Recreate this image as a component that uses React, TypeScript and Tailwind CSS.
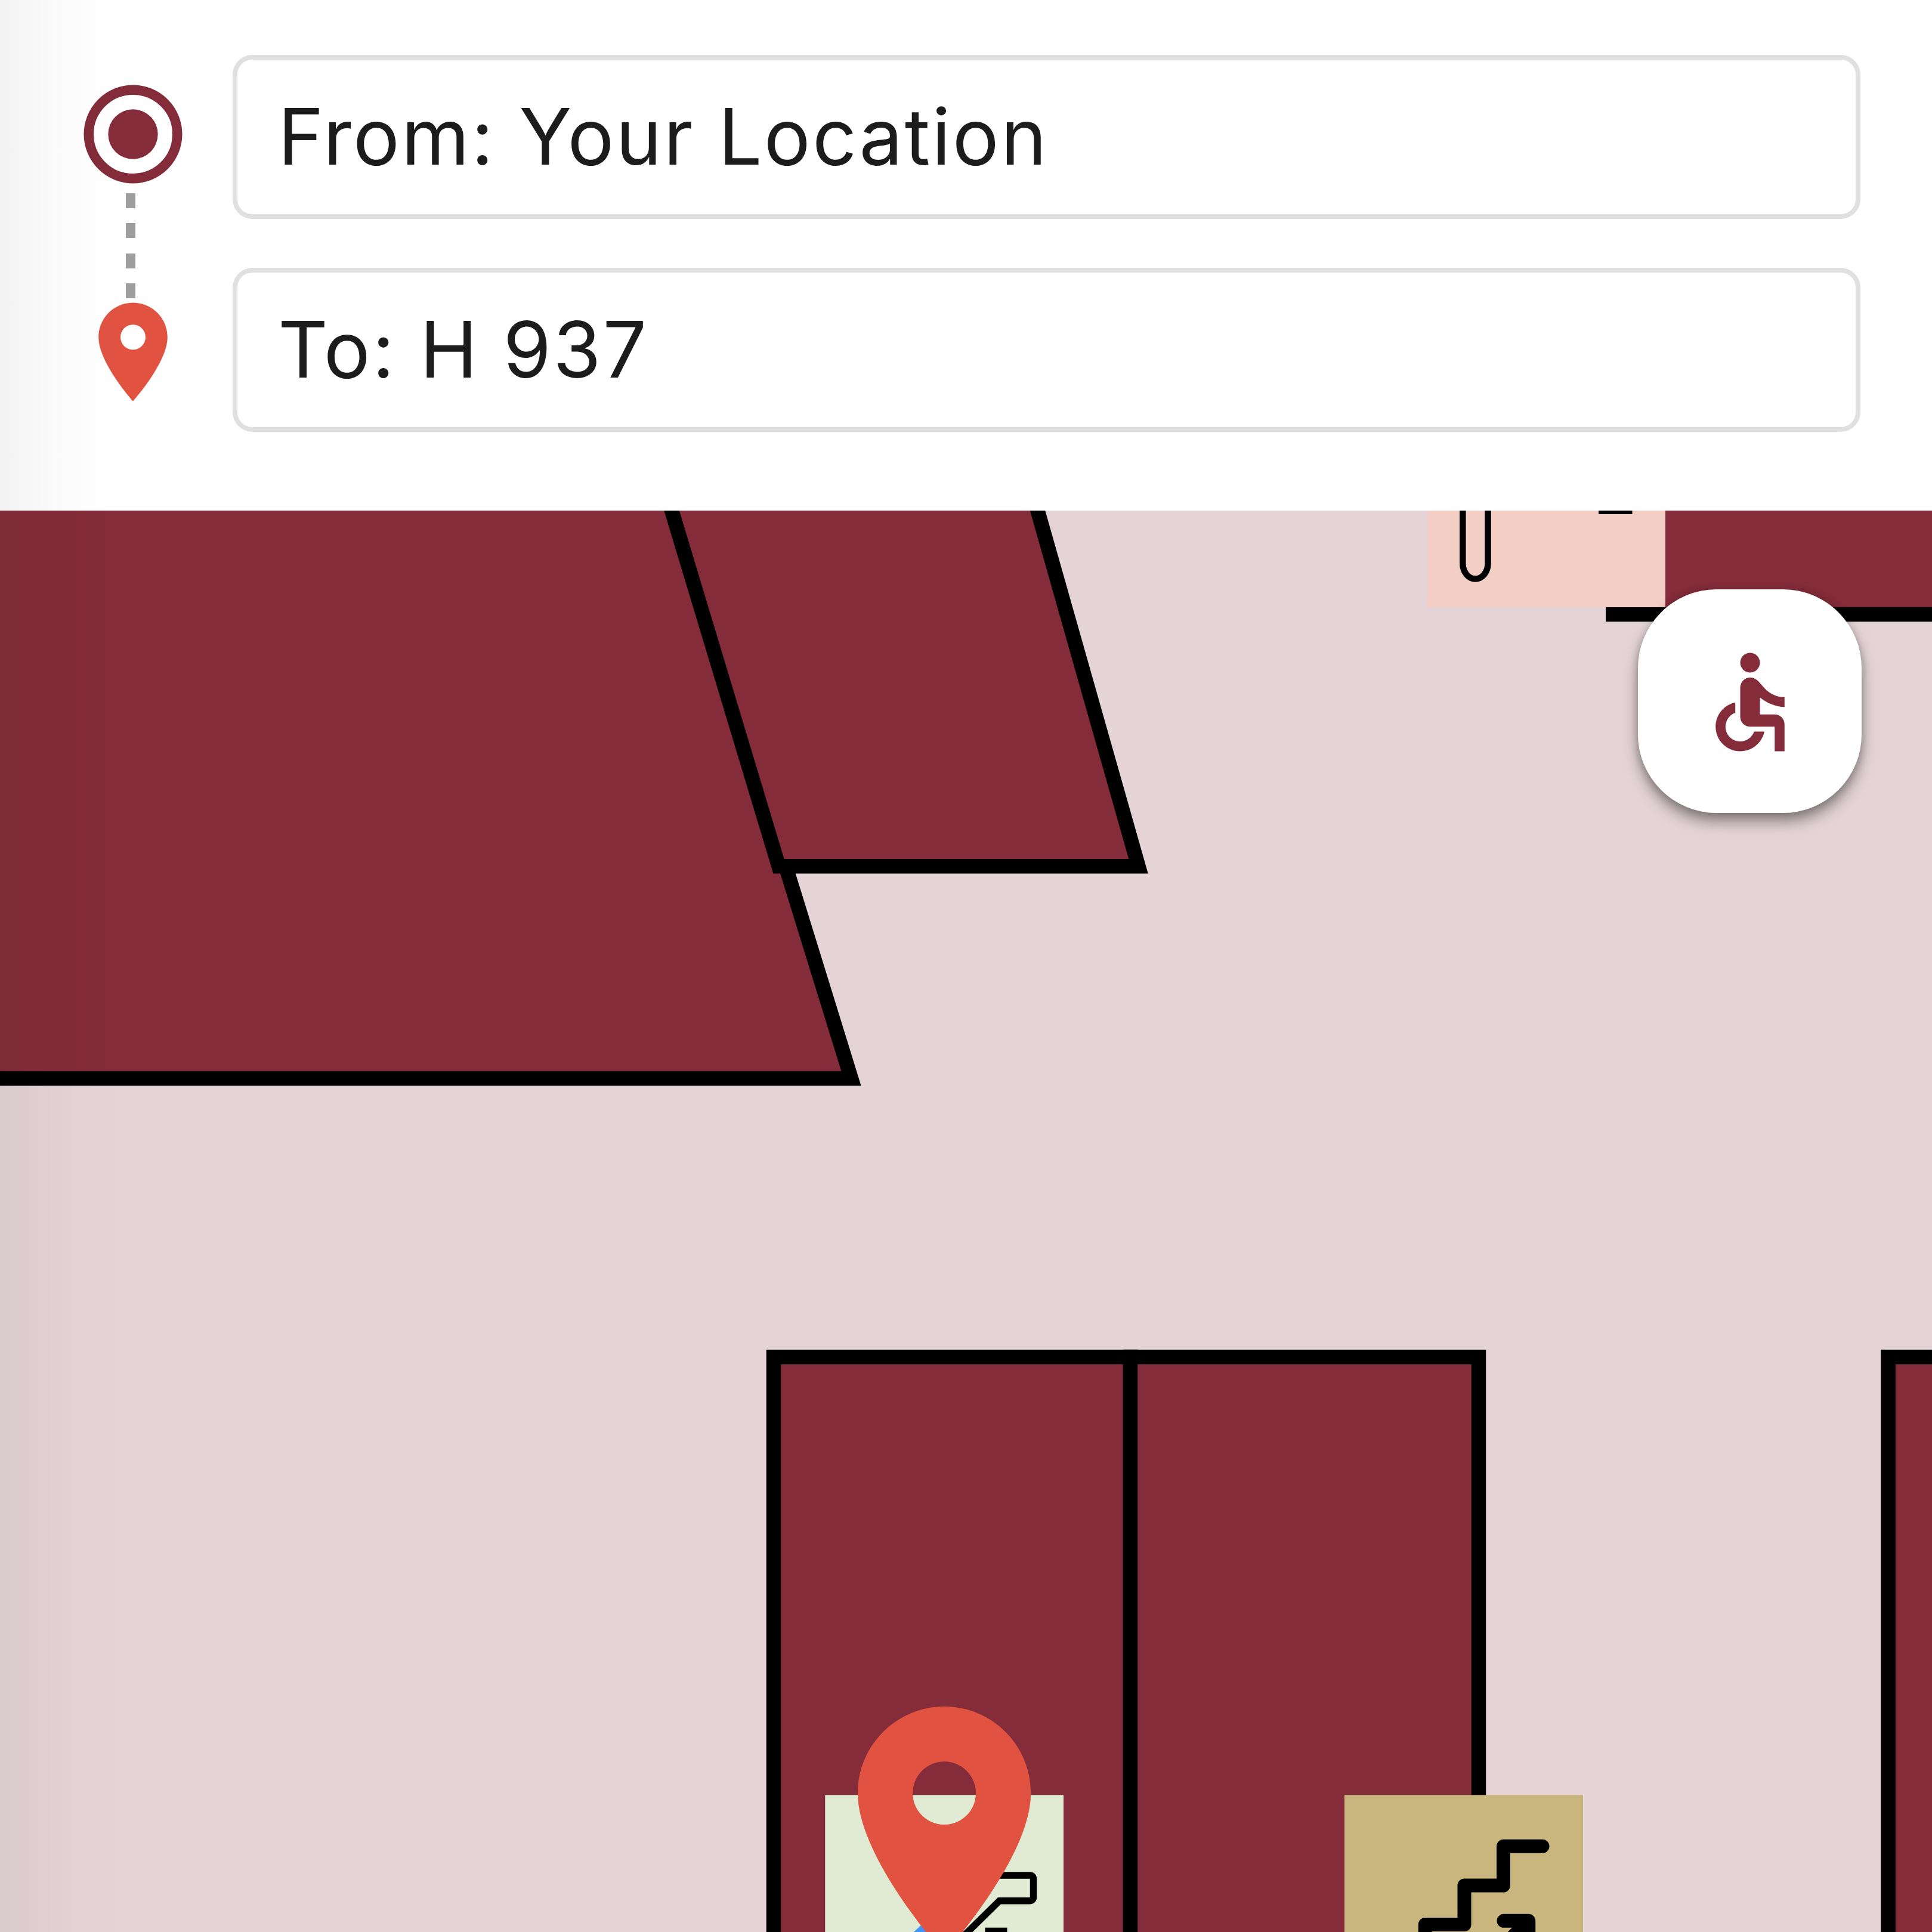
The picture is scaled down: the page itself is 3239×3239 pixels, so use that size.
import React from "react";

function Field({ children }: { children: React.ReactNode }) {
  return (
    <div className="flex h-[275px] items-center rounded-[33px] border-8 border-[#e0e0e0] bg-white pb-[2px] pl-[68px] text-[130px] leading-none font-[380] tracking-[3.1px] text-[#1c1c1c]">
      <span>{children}</span>
    </div>
  );
}

function OriginIcon() {
  return (
    <svg viewBox="0 0 24 24" className="size-[198px] shrink-0">
      <circle cx="12" cy="12" r="9" fill="none" stroke="#842c39" strokeWidth="2" />
      <circle cx="12" cy="12" r="5.05" fill="#842c39" />
    </svg>
  );
}

const PIN_PATH =
  "M12 2C8.13 2 5 5.13 5 9c0 5.25 7 13 7 13s7-7.75 7-13c0-3.87-3.13-7-7-7zm0 9.55a2.55 2.55 0 1 1 0-5.1 2.55 2.55 0 0 1 0 5.1z";

function Dashes() {
  return (
    <div className="-mb-[9px] mr-[9px] flex h-[176px] w-4 shrink-0 flex-col justify-between">
      {[0, 1, 2, 3].map((i) => (
        <div key={i} className="h-[25px] w-4 bg-[#9e9e9e]" />
      ))}
    </div>
  );
}

function FloorMap() {
  return (
    <svg viewBox="0 856 3239 2383" className="block h-[2383px] w-[3239px]">
      <g fill="#842c39" stroke="#000" strokeWidth="24.5">
        <path d="M-60 600V1808H1427L1054 600Z" />
        <path d="M1049 600L1305.500 1452.300H1908.500L1667 600Z" />
        <rect x="1297" y="2275" width="598" height="1100" />
        <rect x="1895" y="2275" width="584" height="1100" />
        <rect x="3165.500" y="2275" width="300" height="1100" />
        <path d="M2704.300 1030.100H3300V700H2704.300Z" />
      </g>

      {/* Elevator marker */}
      <rect x="2393" y="700" width="399" height="318" fill="#f3cec5" />
      <path d="M2452.300 800V944.500a21 26 0 0 0 42.200 0V800" fill="none" stroke="#000" strokeWidth="10.500" />
      <rect x="2680" y="840" width="56.500" height="22" />

      {/* Escalator marker */}
      <rect x="1383.300" y="3009.300" width="399.700" height="300" fill="#e1ebd3" />
      <path
        d="M1640 3144H1726q6.500 0 6.500 6.500V3180q0 6.700-6.500 6.700H1675.500L1600 3261"
        fill="none"
        stroke="#000"
        strokeWidth="11.500"
      />
      <rect x="1651.500" y="3231.700" width="37" height="30" />

      {/* Stairs marker */}
      <rect x="2254" y="3009.300" width="400" height="300" fill="#c9b67e" />
      <g fill="none" stroke="#000" strokeWidth="23" strokeLinecap="round" strokeLinejoin="round">
        <path d="M2586 3095.300H2520.500V3161H2455V3226.500H2389.300V3292" />
        <path d="M2521 3220.300H2562.700V3262M2562.700 3220.300L2500 3283" />
      </g>

      {/* Route and destination pin */}
      <path d="M1543.500 3228L1500 3270H1610Z" fill="#4294f5" />
      <g transform="translate(1334.300 2819.600) scale(20.735)">
        <path d={PIN_PATH} fill="#e15241" />
      </g>
    </svg>
  );
}

function AccessibleButton() {
  return (
    <button className="absolute right-[118px] top-[132px] flex size-[375px] items-center justify-center rounded-[132px] bg-white shadow-[0_15px_24px_0_rgba(0,0,0,0.38),0_2px_14px_0_rgba(0,0,0,0.18)]">
      <svg viewBox="0 0 24 24" className="mt-[3px] size-[198px]" fill="#842c39">
        <circle cx="12" cy="4" r="2" />
        <path d="M19 13v-2c-1.54.02-3.09-.75-4.07-1.83l-1.29-1.43c-.17-.19-.38-.34-.61-.45-.01 0-.01-.01-.02-.01H13c-.35-.2-.75-.3-1.19-.26C10.76 7.11 10 8.04 10 9.09V15c0 1.100.9 2 2 2h5v5h2v-5.500c0-1.100-.9-2-2-2h-3v-3.450c1.290 1.070 3.250 1.940 5 1.950zm-6.170 5c-.41 1.160-1.520 2-2.830 2-1.660 0-3-1.340-3-3 0-1.310.84-2.410 2-2.830V12.100c-2.280.46-4 2.480-4 4.900 0 2.760 2.240 5 5 5 2.420 0 4.440-1.720 4.900-4h-2.070z" />
      </svg>
    </button>
  );
}

export default function App() {
  return (
    <div className="relative flex h-[3239px] w-[3239px] flex-col overflow-hidden bg-[#e4d4d7] font-['Inter',sans-serif]">
      <header className="flex h-[856px] shrink-0 bg-white pl-[124px] pr-[120px]">
        <div className="flex w-[198px] shrink-0 flex-col items-center pt-[126px]">
          <OriginIcon />
          <Dashes />
          <svg viewBox="0 0 24 24" className="size-[198px] shrink-0" fill="#e15241">
            <path d={PIN_PATH} />
          </svg>
        </div>
        <div className="ml-[68px] flex flex-1 flex-col gap-[82px] pt-[92px]">
          <Field>From: Your Location</Field>
          <Field>To: H 937</Field>
        </div>
      </header>
      <main className="relative flex-1 overflow-hidden">
        <FloorMap />
        <AccessibleButton />
      </main>
      <div className="pointer-events-none absolute inset-y-0 left-0 w-[210px] bg-[linear-gradient(to_right,rgba(0,0,0,0.048),rgba(0,0,0,0.022)_35%,rgba(0,0,0,0.008)_70%,transparent)]" />
    </div>
  );
}
